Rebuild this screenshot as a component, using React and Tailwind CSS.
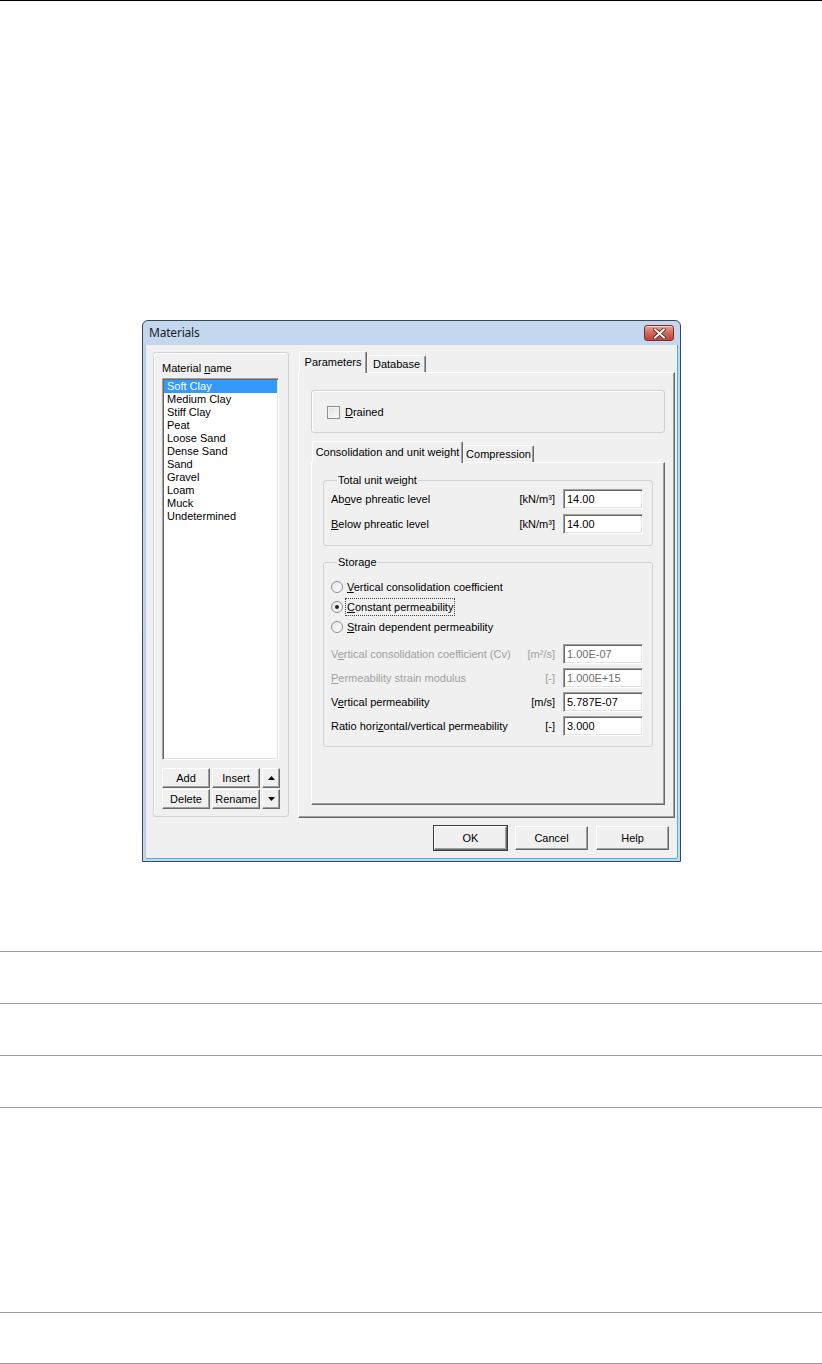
import React from "react";

const F = "font-['Liberation_Sans',Arial,sans-serif]";

function Btn({ children, className = "", def = false }) {
  return (
    <div
      className={
        "flex items-center justify-center bg-[#f0f0f0] text-[11px] text-black border border-t-white border-l-white border-r-[#696969] border-b-[#696969] shadow-[inset_-1px_-1px_0_#a0a0a0] " +
        (def ? "outline outline-1 outline-[#3c3c3c] " : "") +
        className
      }
    >
      {children}
    </div>
  );
}

function Sunken({ className = "", children }) {
  return (
    <div
      className={
        "border border-t-[#a0a0a0] border-l-[#a0a0a0] border-r-white border-b-white shadow-[inset_1px_1px_0_#696969,inset_-1px_-1px_0_#e3e3e3] " +
        className
      }
    >
      {children}
    </div>
  );
}

function Field({ value, disabled }) {
  return (
    <Sunken className="w-[80px] h-[20px] bg-white flex items-center">
      <span className={"pl-[3px] text-[11px] leading-[13px] " + (disabled ? "text-[#6d6d6d]" : "text-black")}>{value}</span>
    </Sunken>
  );
}

function Row({ label, unit, value, disabled }) {
  return (
    <div className="flex items-center h-[20px]">
      <div className={"flex-1 text-[11px] leading-[13px] " + (disabled ? "text-[#a0a0a0]" : "text-black")}>{label}</div>
      <div className={"text-[11px] leading-[13px] " + (disabled ? "text-[#a0a0a0]" : "text-black")}>{unit}</div>
      <div className="ml-[8px]">
        <Field value={value} disabled={disabled} />
      </div>
    </div>
  );
}

function Radio({ checked }) {
  return (
    <div className="w-[12px] h-[12px] rounded-full border border-[#8a8d90] bg-gradient-to-br from-[#e6e6e6] to-white flex items-center justify-center">
      {checked && <div className="w-[4px] h-[4px] rounded-full bg-[#1f1f1f]" />}
    </div>
  );
}

function U({ children }) {
  return <span className="underline underline-offset-[1px]">{children}</span>;
}

function TabSel({ w, children }) {
  return (
    <div
      className={
        "relative z-10 -mb-px h-[22px] bg-[#f0f0f0] flex items-center justify-center rounded-t-[2px] border-l border-t border-r border-l-white border-t-white border-r-[#696969] shadow-[inset_-1px_0_0_#a0a0a0] text-[11px] leading-[13px] " +
        w
      }
    >
      {children}
    </div>
  );
}

function Tab({ w, children }) {
  return (
    <div
      className={
        "h-[17px] bg-[#f0f0f0] flex items-center justify-center rounded-t-[2px] border-l border-t border-r border-l-white border-t-white border-r-[#696969] shadow-[inset_-1px_0_0_#a0a0a0] text-[11px] leading-[13px] " +
        w
      }
    >
      {children}
    </div>
  );
}

const items = [
  "Soft Clay",
  "Medium Clay",
  "Stiff Clay",
  "Peat",
  "Loose Sand",
  "Dense Sand",
  "Sand",
  "Gravel",
  "Loam",
  "Muck",
  "Undetermined",
];

export default function App() {
  return (
    <div className={"w-full min-h-[1364px] bg-white " + F}>
      <div className="h-px bg-black" />

      {/* Dialog window */}
      <div className="ml-[142px] mt-[319px] w-[539px] h-[542px] rounded-t-[6px] border border-[#3b4654] bg-gradient-to-b from-[#c3d8ef] via-[#c1d5ec] to-[#c6d9ee] flex flex-col">
        {/* title bar */}
        <div className="h-[24px] flex items-center pl-[6px] pr-[6px] shrink-0">
          <span className="text-[12px] text-[#1e1e1e] font-['Noto_Sans',sans-serif] leading-[14px] tracking-[-0.2px]">Materials</span>
          <div className="ml-auto w-[30px] h-[16px] rounded-[3px] border border-[#7c2f28] bg-gradient-to-b from-[#e6a497] via-[#d0675a] to-[#c1443a] flex items-center justify-center shadow-[inset_0_1px_0_rgba(255,255,255,0.5)]">
            <svg width="13" height="11" viewBox="0 0 13 11">
              <path d="M2 1.5 L11 9.5 M11 1.5 L2 9.5" stroke="#5a1a14" strokeWidth="3.6" strokeLinecap="square" />
              <path d="M2 1.5 L11 9.5 M11 1.5 L2 9.5" stroke="#ffffff" strokeWidth="2" strokeLinecap="square" />
            </svg>
          </div>
        </div>

        {/* frame + client */}
        <div className="px-[3px] pb-[3px] flex-1 flex">
          <div className="w-[531px] h-[513px] bg-[#f0f0f0] shadow-[0_1px_0_#39b6e8,1px_0_0_#39b6e8,-1px_0_0_#a9c6e6] flex flex-col text-black">
            {/* top section */}
            <div className="flex pt-[6px] pl-[7px]">
              {/* left group */}
              <div className="mt-px w-[136px] h-[465px] rounded-[3px] border border-[#cdd3d8] shadow-[inset_1px_1px_0_#fff] pt-[9px] pl-[8px]">
                <div className="text-[11px] leading-[13px]">
                  Material <U>n</U>ame
                </div>
                <Sunken className="mt-[3px] w-[117px] h-[382px] bg-white pt-px pl-px">
                  {items.map((it, i) => (
                    <div
                      key={it}
                      className={
                        "h-[13px] leading-[13px] text-[11px] pl-[3px] w-[113px] " +
                        (i === 0 ? "bg-[#3399ff] text-white" : "text-black")
                      }
                    >
                      {it}
                    </div>
                  ))}
                </Sunken>
                <div className="mt-[8px] flex flex-col gap-px">
                  <div className="flex gap-[2px]">
                    <Btn className="w-[48px] h-[20px]">Add</Btn>
                    <Btn className="w-[48px] h-[20px]">Insert</Btn>
                    <Btn className="w-[18px] h-[20px]">
                      <svg width="7" height="4" viewBox="0 0 7 4">
                        <path d="M0 4 L3.5 0 L7 4 Z" fill="#000" />
                      </svg>
                    </Btn>
                  </div>
                  <div className="flex gap-[2px]">
                    <Btn className="w-[48px] h-[20px]">Delete</Btn>
                    <Btn className="w-[48px] h-[20px]">Rename</Btn>
                    <Btn className="w-[18px] h-[20px]">
                      <svg width="7" height="4" viewBox="0 0 7 4">
                        <path d="M0 0 L7 0 L3.5 4 Z" fill="#000" />
                      </svg>
                    </Btn>
                  </div>
                </div>
              </div>

              {/* right tab control */}
              <div className="ml-[9px] w-[377px] flex flex-col">
                <div className="h-[21px] flex items-end pl-px">
                  <TabSel w="w-[68px]">Parameters</TabSel>
                  <Tab w="w-[59px]">Database</Tab>
                </div>
                <div className="w-[377px] h-[446px] border border-t-white border-l-white border-r-[#696969] border-b-[#696969] shadow-[inset_-1px_-1px_0_#a0a0a0] pt-[17px] pl-[12px]">
                  {/* Drained box */}
                  <div className="w-[354px] h-[43px] rounded-[3px] border border-[#cdd3d8] shadow-[inset_1px_1px_0_#fff] flex items-center pl-[15px] pt-[2px]">
                    <div className="w-[13px] h-[13px] border border-[#8e8f8f] bg-gradient-to-br from-[#dcdcdc] to-white shadow-[inset_0_0_0_1px_#f4f4f4]" />
                    <span className="ml-[5px] text-[11px] leading-[13px]">
                      <U>D</U>rained
                    </span>
                  </div>

                  {/* inner tabs */}
                  <div className="mt-[8px] h-[21px] flex items-end pl-px">
                    <TabSel w="w-[151px]">Consolidation and unit weight</TabSel>
                    <Tab w="w-[71px]">Compression</Tab>
                  </div>
                  <div className="w-[354px] h-[343px] border border-t-white border-l-white border-r-[#696969] border-b-[#696969] shadow-[inset_-1px_-1px_0_#a0a0a0] pt-[11px] pl-[11px]">
                    <fieldset className="w-[330px] rounded-[3px] border border-[#cdd3d8] pt-[2px] pb-[11px] pl-[7px] pr-[9px]">
                      <legend className="ml-[6px] px-[1px] text-[11px] leading-[13px]">Total unit weight</legend>
                      <div className="flex flex-col gap-[5px]">
                        <Row label={<>Ab<U>o</U>ve phreatic level</>} unit="[kN/m³]" value="14.00" />
                        <Row label={<><U>B</U>elow phreatic level</>} unit="[kN/m³]" value="14.00" />
                      </div>
                    </fieldset>

                    <fieldset className="mt-[10px] w-[330px] rounded-[3px] border border-[#cdd3d8] pt-[10px] pb-[10px] pl-[7px] pr-[9px]">
                      <legend className="ml-[6px] px-[1px] text-[11px] leading-[13px]">Storage</legend>
                      <div className="flex flex-col gap-[4px]">
                        <div className="flex items-center h-[16px]">
                          <Radio />
                          <span className="ml-[4px] text-[11px] leading-[13px]">
                            <U>V</U>ertical consolidation coefficient
                          </span>
                        </div>
                        <div className="flex items-center h-[16px]">
                          <Radio checked />
                          <span className="ml-[3px] px-[1px] h-[16px] flex items-center text-[11px] leading-[13px] outline-1 outline-dotted outline-[#444]">
                            <U>C</U>onstant permeability
                          </span>
                        </div>
                        <div className="flex items-center h-[16px]">
                          <Radio />
                          <span className="ml-[4px] text-[11px] leading-[13px]">
                            <U>S</U>train dependent permeability
                          </span>
                        </div>
                      </div>
                      <div className="mt-[9px] flex flex-col gap-[4px]">
                        <Row disabled label={<>V<U>e</U>rtical consolidation coefficient (Cv)</>} unit="[m²/s]" value="1.00E-07" />
                        <Row disabled label={<><U>P</U>ermeability strain modulus</>} unit="[-]" value="1.000E+15" />
                        <Row label={<>V<U>e</U>rtical permeability</>} unit="[m/s]" value="5.787E-07" />
                        <Row label={<>Ratio hori<U>z</U>ontal/vertical permeability</>} unit="[-]" value="3.000" />
                      </div>
                    </fieldset>
                  </div>
                </div>
              </div>
            </div>

            {/* bottom buttons */}
            <div className="mt-[8px] flex justify-end gap-[8px] pr-[8px]">
              <Btn def className="w-[73px] h-[24px]">OK</Btn>
              <Btn className="w-[73px] h-[24px]">Cancel</Btn>
              <Btn className="w-[73px] h-[24px]">Help</Btn>
            </div>
          </div>
        </div>
      </div>

      <div className="mt-[89px] h-px bg-[#999]" />
      <div className="mt-[51px] h-px bg-[#999]" />
      <div className="mt-[51px] h-px bg-[#999]" />
      <div className="mt-[51px] h-px bg-[#999]" />
      <div className="mt-[204px] h-px bg-[#999]" />
      <div className="mt-[50px] h-px bg-[#999]" />
    </div>
  );
}
